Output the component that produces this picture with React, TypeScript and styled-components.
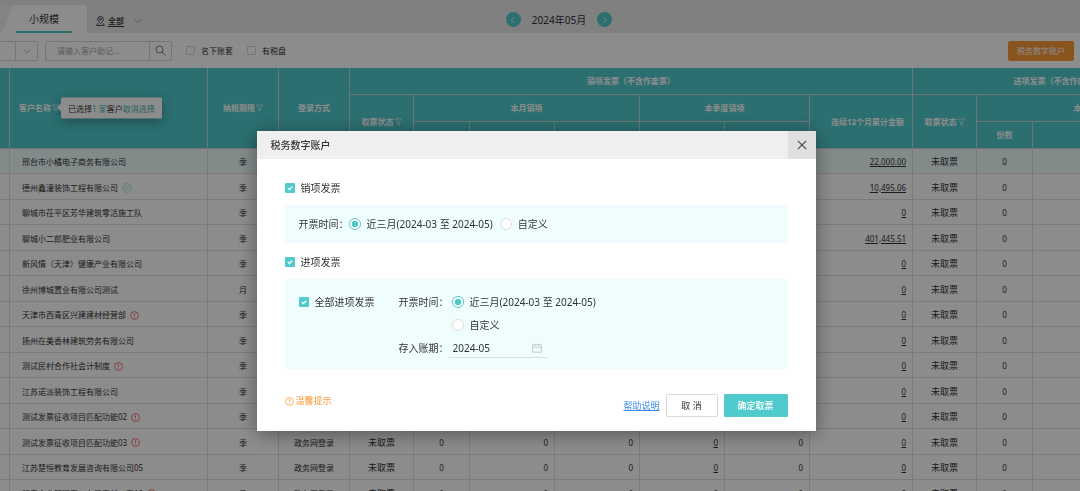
import React, { useState } from 'react';
import styled, { createGlobalStyle, css } from 'styled-components';

const TEAL = '#50cacc';

const GlobalStyle = createGlobalStyle`
  *, *::before, *::after { box-sizing: border-box; }
  html, body { margin: 0; height: 100%; }
  #root { height: 100%; }
  body, button, input {
    font-family: "Noto Sans", "Noto Sans CJK SC", sans-serif;
    font-size: 10px;
    line-height: 14px;
    color: #333;
  }
  button { cursor: pointer; }
`;

const Page = styled.div`
  height: 100vh;
  overflow: hidden;
  background: #fff;
  display: flex;
  flex-direction: column;
`;

/* ---------- top bar ---------- */

const TopBar = styled.header`
  flex: none;
  height: 33px;
  background: #e9e9e9;
  display: grid;
  grid-template-columns: 1fr auto 1fr;
`;

const TopLeft = styled.div`
  display: flex;
  align-items: flex-end;
`;

const PreviousTab = styled.span`
  width: 16px;
  height: 28px;
  background: #f1f1f1;
`;

const Tab = styled.button`
  width: 85px;
  height: 28px;
  margin-left: -14px;
  padding: 0 15px 0 14px;
  border: 0;
  border-radius: 0 3px 0 0;
  background: #fff;
  clip-path: polygon(12px 0, 100% 0, 100% 100%, 0 100%);
`;

const TabLabel = styled.span`
  display: block;
  height: 28px;
  line-height: 29px;
  border-bottom: 2px solid ${TEAL};
`;

const AreaPicker = styled.button`
  height: 24px;
  margin-left: 9px;
  padding: 0;
  border: 0;
  background: none;
  display: flex;
  align-items: center;
  gap: 3px;
  font-size: 8px;
`;

const Underlined = styled.span`
  margin-right: 7px;
  text-decoration: underline;
  text-underline-offset: 2px;
  font-weight: 500;
`;

const MonthNav = styled.nav`
  display: flex;
  align-items: center;
  gap: 11px;
  padding: 6px 0 0 38px;
`;

const RoundButton = styled.button`
  width: 15px;
  height: 15px;
  padding: 0;
  border: 0;
  border-radius: 50%;
  background: ${TEAL};
  display: grid;
  place-items: center;
`;

/* ---------- filters ---------- */

const Filters = styled.div`
  flex: none;
  height: 35px;
  padding: 0 6px 0 0;
  display: flex;
  align-items: center;
  font-size: 8px;
`;

const Box = styled.div`
  height: 20px;
  border: 1px solid #d5d5d5;
  border-radius: 2px;
  display: flex;
  align-items: stretch;
`;

const ScopeBox = styled(Box)`
  width: 38px;
  margin-right: 7px;
  border-left: 0;
  border-radius: 0 2px 2px 0;
  justify-content: flex-end;
`;

const SearchBox = styled(Box)`
  width: 127px;
  margin-right: 14px;
`;

const BoxButton = styled.button`
  width: 22px;
  padding: 0;
  border: 0;
  border-left: 1px solid #d5d5d5;
  background: none;
  display: grid;
  place-items: center;
`;

const SearchInput = styled.input`
  flex: 1;
  min-width: 0;
  padding: 0 11px;
  border: 0;
  background: none;
  outline: none;
  font-size: 8px;
  &::placeholder { color: #a6a6a6; opacity: 1; }
`;

const FilterCheck = styled.label`
  display: flex;
  align-items: center;
  gap: 6px;
  margin-right: 14px;
`;

const OrangeButton = styled.button`
  height: 20px;
  margin-left: auto;
  padding: 0 9px;
  border: 0;
  border-radius: 2px;
  background: #fb993a;
  color: #fff;
  font-size: 8px;
`;

/* ---------- form controls ---------- */

const Check = styled.input.attrs({ type: 'checkbox' })<{ $size: number }>`
  appearance: none;
  flex: none;
  width: ${(p) => p.$size}px;
  height: ${(p) => p.$size}px;
  margin: 0;
  border: 1px solid #d5d5d5;
  border-radius: 1px;
  background: #fff;
  &:checked {
    border-color: ${TEAL};
    background: ${TEAL};
  }
`;

const CheckWrap = styled.span`
  display: grid;
  place-items: center;
  > * { grid-area: 1 / 1; }
  > svg { pointer-events: none; }
`;

const Radio = styled.input.attrs({ type: 'radio' })`
  appearance: none;
  flex: none;
  width: 12px;
  height: 12px;
  margin: 0;
  border: 1px solid #dcdcdc;
  border-radius: 50%;
  background: #fff;
  &:checked {
    border-color: ${TEAL};
    background: radial-gradient(circle, ${TEAL} 0 3px, #fff 3px);
  }
`;

/* ---------- table ---------- */

const TableArea = styled.main`
  flex: 1;
  min-height: 0;
  overflow: hidden;
`;

const Table = styled.table`
  width: max(100%, 1203px);
  table-layout: fixed;
  border-collapse: separate;
  border-spacing: 0;
  font-size: 8px;
  line-height: 12px;
`;

const HeadCell = styled.th`
  height: 27px;
  padding: 0;
  background: ${TEAL};
  color: #fff;
  font-weight: 700;
  white-space: nowrap;
  border-right: 1px solid #c9d6d6;
  border-bottom: 1px solid #c9d6d6;
`;

const HeadInner = styled.span<{ $align?: string }>`
  display: flex;
  align-items: center;
  justify-content: ${(p) => p.$align ?? 'center'};
  gap: 1px;
  padding: ${(p) => (p.$align === 'flex-end' ? '0 8px' : p.$align ? '0 9px' : '0')};
`;

const Row = styled.tr<{ $selected?: boolean }>`
  height: 25px;
  &:nth-child(even) { height: 26px; }
  ${(p) => p.$selected && css`background: #eefcfb;`}
`;

const Cell = styled.td<{ $align?: 'left' | 'center' | 'right' }>`
  padding: ${(p) => (p.$align === 'left' ? '2px 12px 0' : p.$align === 'right' ? '2px 6px 0' : '2px 0 0')};
  text-align: ${(p) => p.$align ?? 'center'};
  white-space: nowrap;
  border-right: 1px solid #e0e0e0;
  border-bottom: 1px solid #e0e0e0;
`;

const StateCell = styled(Cell)`
  font-size: 9px;
`;

const NameLine = styled.span`
  display: flex;
  align-items: center;
  gap: 4px;
`;

const Amount = styled.a`
  color: inherit;
  text-decoration: underline;
  text-underline-offset: 1px;
`;

const NameAnchor = styled.span`
  position: relative;
  display: flex;
`;

const Tip = styled.span`
  position: absolute;
  left: 100%;
  top: 50%;
  transform: translateY(-50%);
  height: 21px;
  margin-left: 2px;
  padding: 0 7px;
  border-radius: 1px;
  background: #fff;
  color: #333;
  line-height: 21px;
  font-weight: 400;
  box-shadow: 0 3px 12px rgba(0, 0, 0, 0.3);
  &::before {
    content: '';
    position: absolute;
    left: -4px;
    top: 6px;
    border: 4px solid transparent;
    border-left: 0;
    border-right-color: #fff;
  }
`;

const TipLink = styled.a`
  color: #3bb4b6;
  text-decoration: none;
`;

/* ---------- dialog ---------- */

const Overlay = styled.div`
  position: fixed;
  inset: 0;
  background: rgba(0, 0, 0, 0.45);
  display: flex;
  justify-content: center;
  align-items: flex-start;
  padding: 131px 8px 0 0;
`;

const Dialog = styled.section`
  width: 559px;
  background: #fff;
  box-shadow: 0 3px 18px rgba(0, 0, 0, 0.4);
`;

const DialogHead = styled.div`
  height: 28px;
  padding-left: 14px;
  background: #efefef;
  display: flex;
  align-items: center;
  justify-content: space-between;
`;

const DialogTitle = styled.h2`
  margin: 0;
  font-size: 10px;
  font-weight: 500;
`;

const CloseButton = styled.button`
  width: 28px;
  height: 28px;
  padding: 0;
  border: 0;
  background: #e0e0e0;
  display: grid;
  place-items: center;
`;

const DialogBody = styled.div`
  padding: 22px 28px 0;
`;

const OptionLabel = styled.label`
  display: flex;
  align-items: center;
  gap: 6px;
  height: 14px;
  white-space: nowrap;
`;

const Panel = styled.div`
  margin: 10px 0 12px;
  padding: 12px 14px;
  background: #f0fdff;
  display: flex;
`;

const TallPanel = styled(Panel)`
  padding: 16px 14px 11px;
  margin-bottom: 0;
  gap: 24px;
`;

const Choice = styled(OptionLabel)`
  margin-right: 7px;
`;

const Caption = styled.span`
  white-space: nowrap;
`;

const Fields = styled.div`
  display: grid;
  grid-template-columns: 53px auto;
  row-gap: 9px;
`;

const ChoiceB = styled(Choice)`
  grid-column: 2;
`;

const MonthField = styled.span`
  width: 98px;
  height: 17px;
  margin-left: -3px;
  padding: 0 5px 2px 4px;
  border-bottom: 1px solid #d9dfe0;
  display: flex;
  align-items: center;
  justify-content: space-between;
`;

const MonthInput = styled.input`
  width: 60px;
  padding: 0;
  border: 0;
  background: none;
  outline: none;
`;

const DialogFoot = styled.div`
  padding: 25px 28px 14px;
  display: flex;
  align-items: center;
  gap: 6px;
`;

const Hint = styled.span`
  display: flex;
  align-items: center;
  gap: 2px;
  margin: 0 auto 9px 0;
  color: #fb993a;
  font-size: 9px;
`;

const HelpLink = styled.a`
  color: #3d8bea;
  font-size: 9px;
  text-underline-offset: 1px;
`;

const ActionButton = styled.button<{ $primary?: boolean }>`
  width: ${(p) => (p.$primary ? 64 : 52)}px;
  height: 23px;
  padding: 0;
  border: 1px solid ${(p) => (p.$primary ? TEAL : '#d9d9d9')};
  border-radius: 1px;
  background: ${(p) => (p.$primary ? TEAL : '#fff')};
  color: ${(p) => (p.$primary ? '#fff' : '#333')};
  font-size: 9px;
  font-weight: ${(p) => (p.$primary ? 500 : 400)};
`;

/* ---------- icons ---------- */

const Chevron = ({ dir = 'down', size = 8, color = '#999' }: { dir?: 'down' | 'left' | 'right'; size?: number; color?: string }) => {
  const d = { down: 'M1 3l4 4.5L9 3', left: 'M6.5 1.5L3 5l3.500 3.500', right: 'M3.500 1.500L7 5l-3.500 3.500' }[dir];
  return (
    <svg width={size} height={size} viewBox="0 0 10 10" fill="none" stroke={color} strokeWidth="1">
      <path d={d} />
    </svg>
  );
};

const PinIcon = () => (
  <svg width="9" height="10" viewBox="0 0 9 10" fill="none" stroke="#333" strokeWidth="0.9">
    <path d="M4.500 7.600C2.600 5.800 1.700 4.600 1.700 3.300a2.800 2.800 0 0 1 5.600 0c0 1.300-.9 2.500-2.800 4.300z" />
    <circle cx="4.500" cy="3.300" r="0.900" />
    <path d="M2 7.200L.6 9.400h7.800L7 7.200" />
  </svg>
);

const SearchIcon = () => (
  <svg width="11" height="11" viewBox="0 0 11 11" fill="none" stroke="#777" strokeWidth="1">
    <circle cx="4.500" cy="4.500" r="3.500" />
    <path d="M7 7l3.400 3.400" />
  </svg>
);

const FunnelIcon = () => (
  <svg width="7" height="8" viewBox="0 0 7 8" fill="none" stroke="#e8f6f6" strokeWidth="0.700">
    <path d="M.5.9h6L4.400 3.800v3.100L2.600 6.100V3.800z" />
  </svg>
);

const AlertIcon = ({ color = '#f0524f' }: { color?: string }) => (
  <svg width="9" height="9" viewBox="0 0 9 9" fill="none" stroke={color} strokeWidth="0.800">
    <circle cx="4.500" cy="4.500" r="3.900" />
    <path d="M4.500 2.200v2.900M4.500 6v.9" />
  </svg>
);

const LinkIcon = () => (
  <svg width="10" height="10" viewBox="0 0 10 10" fill="none" stroke="#a5dcda" strokeWidth="0.800">
    <circle cx="5" cy="5" r="4.400" />
    <path d="M4.300 6.900l-.5.3a1 1 0 0 1-1-1.500l2-2.200a1 1 0 0 1 1.500 1M5.700 3.100l.5-.3a1 1 0 0 1 1 1.500l-2 2.200a1 1 0 0 1-1.500-1" />
  </svg>
);

const CloseIcon = () => (
  <svg width="10" height="10" viewBox="0 0 10 10" stroke="#444" strokeWidth="1.100">
    <path d="M.8.8l8.400 8.400M9.200.8L.8 9.200" />
  </svg>
);

const Tick = () => (
  <svg width="8" height="8" viewBox="0 0 8 8" fill="none" stroke="#fff" strokeWidth="1.300">
    <path d="M1.800 4l1.600 1.600L6.300 2.600" />
  </svg>
);

const CalendarIcon = () => (
  <svg width="10" height="10" viewBox="0 0 10 10" fill="none" stroke="#b9c0c2" strokeWidth="0.800">
    <path d="M.7 1.800h8.600v7.400H.7zM.7 4.300h8.600M3 .5v2.300M7 .5v2.300" />
  </svg>
);

/* ---------- data ---------- */

type Client = { name: string; term?: string; total?: string; mark?: 'alert' | 'link' };

const clients: Client[] = [
  { name: '邢台市小橘电子商务有限公司', total: '22,000.00' },
  { name: '德州鑫潼装饰工程有限公司', total: '10,495.06', mark: 'link' },
  { name: '聊城市茌平区芳华建筑零活施工队' },
  { name: '聊城小二郎肥业有限公司', total: '401,445.51' },
  { name: '新风情（天津）健康产业有限公司' },
  { name: '徐州博城置业有限公司测试', term: '月' },
  { name: '天津市西青区兴建建材经营部', mark: 'alert' },
  { name: '扬州在美香林建筑劳务有限公司' },
  { name: '测试民村合作社会计制度', mark: 'alert' },
  { name: '江苏诺派装饰工程有限公司' },
  { name: '测试发票征收项目匹配功能02', mark: 'alert' },
  { name: '测试发票征收项目匹配功能03', mark: 'alert' },
  { name: '江苏楚恒教育发展咨询有限公司05' },
  { name: '明意企业管理泰州有限责任公司10', mark: 'alert' },
];

const columnWidths = [10, 198, 71, 71, 64, 56, 85, 85, 85, 85, 103, 64, 56, 85, 85];

const Checkbox = ({ initial = false, size = 10 }: { initial?: boolean; size?: number }) => {
  const [on, setOn] = useState(initial);
  return (
    <CheckWrap>
      <Check $size={size} checked={on} onChange={() => setOn(!on)} />
      {on && <Tick />}
    </CheckWrap>
  );
};

const ClientTable = () => (
  <Table>
    <colgroup>
      {columnWidths.map((w, i) => <col key={i} width={w} />)}
    </colgroup>
    <thead>
      <tr>
        <HeadCell rowSpan={3} />
        <HeadCell rowSpan={3}>
          <HeadInner $align="flex-start">
            客户名称
            <NameAnchor>
              <FunnelIcon />
              <Tip>
                已选择<TipLink href="#">1 家</TipLink>客户<TipLink href="#">取消选择</TipLink>
              </Tip>
            </NameAnchor>
          </HeadInner>
        </HeadCell>
        <HeadCell rowSpan={3}><HeadInner>纳税期限<FunnelIcon /></HeadInner></HeadCell>
        <HeadCell rowSpan={3}>登录方式</HeadCell>
        <HeadCell colSpan={7}>销项发票（不含作废票）</HeadCell>
        <HeadCell colSpan={4}>进项发票（不含作废票）</HeadCell>
      </tr>
      <tr>
        <HeadCell rowSpan={2}><HeadInner>取票状态<FunnelIcon /></HeadInner></HeadCell>
        <HeadCell colSpan={3}>本月销项</HeadCell>
        <HeadCell colSpan={2}>本季度销项</HeadCell>
        <HeadCell rowSpan={2}><HeadInner $align="flex-end">连续12个月累计金额</HeadInner></HeadCell>
        <HeadCell rowSpan={2}><HeadInner>取票状态<FunnelIcon /></HeadInner></HeadCell>
        <HeadCell colSpan={3}>本月进项</HeadCell>
      </tr>
      <tr>
        <HeadCell />
        <HeadCell />
        <HeadCell />
        <HeadCell />
        <HeadCell />
        <HeadCell>份数</HeadCell>
        <HeadCell />
        <HeadCell />
      </tr>
    </thead>
    <tbody>
      {clients.map((c, i) => (
        <Row key={c.name} $selected={i === 0}>
          <Cell />
          <Cell $align="left">
            <NameLine>
              {c.name}
              {c.mark === 'alert' && <AlertIcon />}
              {c.mark === 'link' && <LinkIcon />}
            </NameLine>
          </Cell>
          <Cell>{c.term ?? '季'}</Cell>
          <Cell>政务网登录</Cell>
          <StateCell>未取票</StateCell>
          <Cell>0</Cell>
          <Cell $align="right">0</Cell>
          <Cell $align="right">0</Cell>
          <Cell $align="right"><Amount href="#">0</Amount></Cell>
          <Cell $align="right">0</Cell>
          <Cell $align="right"><Amount href="#">{c.total ?? '0'}</Amount></Cell>
          <StateCell>未取票</StateCell>
          <Cell>0</Cell>
          <Cell />
          <Cell />
        </Row>
      ))}
    </tbody>
  </Table>
);

const InvoiceDialog = () => (
  <Overlay>
    <Dialog role="dialog" aria-labelledby="dialog-title">
      <DialogHead>
        <DialogTitle id="dialog-title">税务数字账户</DialogTitle>
        <CloseButton aria-label="关闭"><CloseIcon /></CloseButton>
      </DialogHead>
      <DialogBody>
        <OptionLabel><Checkbox initial />销项发票</OptionLabel>
        <Panel>
          <Caption>开票时间：</Caption>
          <Choice><Radio name="out" defaultChecked />近三月(2024-03 至 2024-05)</Choice>
          <Choice><Radio name="out" />自定义</Choice>
        </Panel>
        <OptionLabel><Checkbox initial />进项发票</OptionLabel>
        <TallPanel>
          <OptionLabel><Checkbox initial />全部进项发票</OptionLabel>
          <Fields>
            <Caption>开票时间：</Caption>
            <Choice><Radio name="in" defaultChecked />近三月(2024-03 至 2024-05)</Choice>
            <ChoiceB><Radio name="in" />自定义</ChoiceB>
            <Caption as="label" htmlFor="period">存入账期：</Caption>
            <MonthField>
              <MonthInput id="period" defaultValue="2024-05" />
              <CalendarIcon />
            </MonthField>
          </Fields>
        </TallPanel>
      </DialogBody>
      <DialogFoot>
        <Hint><AlertIcon color="#fb993a" />温馨提示</Hint>
        <HelpLink href="#">帮助说明</HelpLink>
        <ActionButton>取 消</ActionButton>
        <ActionButton $primary>确定取票</ActionButton>
      </DialogFoot>
    </Dialog>
  </Overlay>
);

export default function App() {
  return (
    <Page>
      <GlobalStyle />
      <TopBar>
        <TopLeft>
          <PreviousTab />
          <Tab><TabLabel>小规模</TabLabel></Tab>
          <AreaPicker><PinIcon /><Underlined>全部</Underlined><Chevron /></AreaPicker>
        </TopLeft>
        <MonthNav>
          <RoundButton aria-label="上个月"><Chevron dir="left" color="#fff" /></RoundButton>
          <span>2024年05月</span>
          <RoundButton aria-label="下个月"><Chevron dir="right" color="#fff" /></RoundButton>
        </MonthNav>
      </TopBar>
      <Filters>
        <ScopeBox><BoxButton aria-label="范围"><Chevron /></BoxButton></ScopeBox>
        <SearchBox>
          <SearchInput aria-label="客户" placeholder="请输入客户助记..." />
          <BoxButton aria-label="搜索"><SearchIcon /></BoxButton>
        </SearchBox>
        <FilterCheck><Checkbox size={9} />名下账套</FilterCheck>
        <FilterCheck><Checkbox size={9} />有税盘</FilterCheck>
        <OrangeButton>税务数字账户</OrangeButton>
      </Filters>
      <TableArea><ClientTable /></TableArea>
      <InvoiceDialog />
    </Page>
  );
}
